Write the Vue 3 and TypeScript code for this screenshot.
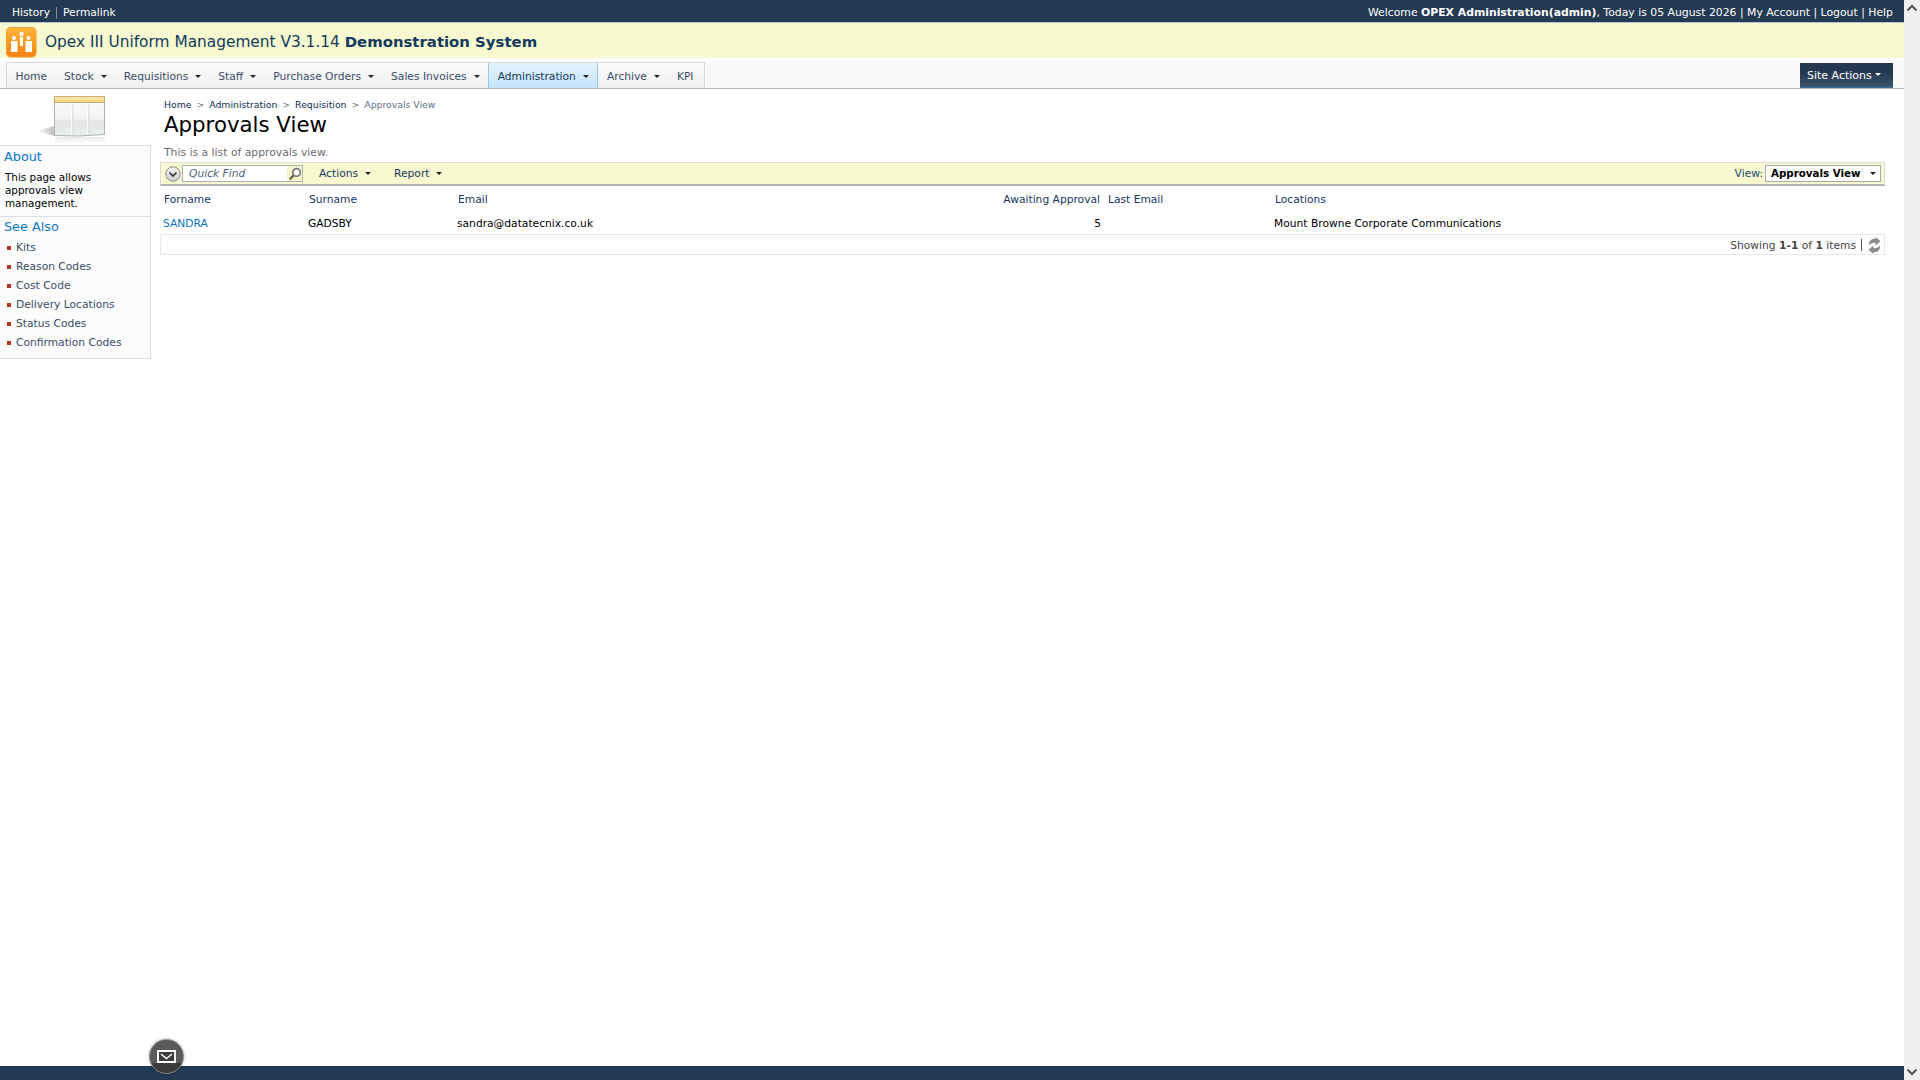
<script setup lang="ts">
interface NavItem { label: string; caret: boolean; active?: boolean }
const navItems: NavItem[] = [
  { label: 'Home', caret: false },
  { label: 'Stock', caret: true },
  { label: 'Requisitions', caret: true },
  { label: 'Staff', caret: true },
  { label: 'Purchase Orders', caret: true },
  { label: 'Sales Invoices', caret: true },
  { label: 'Administration', caret: true, active: true },
  { label: 'Archive', caret: true },
  { label: 'KPI', caret: false },
]
const seeAlso: string[] = ['Kits', 'Reason Codes', 'Cost Code', 'Delivery Locations', 'Status Codes', 'Confirmation Codes']
</script>

<template>
  <div class="shell">
    <div class="page">
      <header class="topbar">
        <div class="top-left"><a>History</a><i class="vsep"></i><a>Permalink</a></div>
        <div class="top-right">Welcome <b>OPEX Administration(admin)</b>, Today is 05 August 2026 | My Account | Logout | Help</div>
      </header>
      <div class="banner">
        <svg class="logo" width="31" height="31" viewBox="0 0 31 31">
          <defs>
            <linearGradient id="lg" x1="0" y1="0" x2="0" y2="1">
              <stop offset="0" stop-color="#fdb53a" />
              <stop offset="1" stop-color="#f5820f" />
            </linearGradient>
          </defs>
          <rect x="0.5" y="0.5" width="29.5" height="29.5" rx="4" fill="url(#lg)" stroke="#f0a030" />
          <circle cx="15.5" cy="7" r="2.2" fill="#fff" />
          <circle cx="8" cy="11" r="2" fill="#fff" />
          <circle cx="22.5" cy="11" r="2" fill="#fff" />
          <rect x="5" y="14" width="6.5" height="11" fill="#fff" />
          <rect x="19.5" y="14" width="6.5" height="11" fill="#fff" />
          <rect x="14" y="10" width="3" height="9" fill="#fff" />
        </svg>
        <div class="brand">Opex III Uniform Management V3.1.14 <b>Demonstration System</b></div>
      </div>
      <nav class="navrow">
        <ul class="nav">
          <li v-for="item in navItems" :key="item.label" :class="{ active: item.active }">
            {{ item.label }}<span v-if="item.caret" class="caret"></span>
          </li>
        </ul>
        <button class="site-actions">Site Actions<span class="caret light"></span></button>
      </nav>
      <main class="body">
        <aside class="side">
          <div class="side-icon">
            <svg width="80" height="50" viewBox="0 0 80 50">
              <defs>
                <linearGradient id="hd" x1="0" y1="0" x2="0" y2="1">
                  <stop offset="0" stop-color="#fbeeb8" />
                  <stop offset="1" stop-color="#f0cf70" />
                </linearGradient>
                <linearGradient id="pane" x1="0" y1="0" x2="0" y2="1">
                  <stop offset="0" stop-color="#fafbfb" />
                  <stop offset="0.55" stop-color="#f2f3f3" />
                  <stop offset="0.62" stop-color="#e4e6e6" />
                  <stop offset="1" stop-color="#ecedee" />
                </linearGradient>
                <linearGradient id="shad" x1="0" y1="0" x2="1" y2="0">
                  <stop offset="0" stop-color="#fff" />
                  <stop offset="1" stop-color="#c4c4c4" />
                </linearGradient>
                <linearGradient id="refl" x1="0" y1="0" x2="0" y2="1">
                  <stop offset="0" stop-color="#e8eaea" />
                  <stop offset="1" stop-color="#ffffff" />
                </linearGradient>
              </defs>
              <polygon points="10,35 28,30 28,40" fill="url(#shad)" />
              <rect x="28.5" y="41" width="50" height="7" fill="url(#refl)" />
              <path d="M28.5 0.5 H78.5 V38.5 Q53 41 28.5 39.5 Z" fill="url(#pane)" stroke="#a9b8b0" />
              <rect x="28.5" y="0.5" width="50" height="6" fill="url(#hd)" stroke="#c9b070" />
              <line x1="46" y1="7" x2="46" y2="39" stroke="#fff" stroke-width="1.5" />
              <line x1="46.8" y1="7" x2="46.8" y2="39" stroke="#b9c4bf" stroke-width="0.6" />
              <line x1="62" y1="7" x2="62" y2="39" stroke="#fff" stroke-width="1.5" />
              <line x1="62.8" y1="7" x2="62.8" y2="39" stroke="#b9c4bf" stroke-width="0.6" />
            </svg>
          </div>
          <div class="side-box">
            <section class="about">
              <h3>About</h3>
              <p>This page allows approvals view management.</p>
            </section>
            <section class="also">
              <h3>See Also</h3>
              <ul>
                <li v-for="link in seeAlso" :key="link">{{ link }}</li>
              </ul>
            </section>
          </div>
        </aside>
        <section class="content">
          <div class="crumbs">
            <a>Home</a><span class="gt">&gt;</span><a>Administration</a><span class="gt">&gt;</span><a>Requisition</a><span class="gt">&gt;</span><span class="cur">Approvals View</span>
          </div>
          <h1>Approvals View</h1>
          <p class="desc">This is a list of approvals view.</p>
          <div class="toolbar">
            <svg class="circle" width="16" height="16" viewBox="0 0 16 16">
              <defs>
                <linearGradient id="circ" x1="0" y1="0" x2="0" y2="1">
                  <stop offset="0" stop-color="#f4f4f4" />
                  <stop offset="1" stop-color="#cfcfcf" />
                </linearGradient>
              </defs>
              <circle cx="8" cy="8" r="7.2" fill="url(#circ)" stroke="#8a8a8a" />
              <path d="M4.5 6.5 L8 10 L11.5 6.5" fill="none" stroke="#333" stroke-width="1.6" />
            </svg>
            <div class="find">
              <span class="find-text">Quick Find</span>
              <span class="find-btn">
                <svg width="14" height="14" viewBox="0 0 14 14">
                  <circle cx="8.5" cy="5.5" r="3.8" fill="#fff" stroke="#777" stroke-width="1.8" />
                  <line x1="5.6" y1="8.4" x2="1.8" y2="12.4" stroke="#6a6a5a" stroke-width="2.4" />
                </svg>
              </span>
            </div>
            <span class="tool">Actions<span class="caret"></span></span>
            <span class="tool report">Report<span class="caret"></span></span>
            <span class="view-label">View:</span>
            <span class="view-select">Approvals View<span class="caret dark"></span></span>
          </div>
          <div class="grid head">
            <span class="c1">Forname</span><span class="c2">Surname</span><span class="c3">Email</span><span class="c4">Awaiting Approval</span><span class="c5">Last Email</span><span class="c6">Locations</span>
          </div>
          <div class="grid row">
            <a class="c1 link">SANDRA</a><span class="c2">GADSBY</span><span class="c3">sandra@datatecnix.co.uk</span><span class="c4 five">5</span><span class="c5"></span><span class="c6">Mount Browne Corporate Communications</span>
          </div>
          <div class="pager">
            <span>Showing <b>1-1</b> of <b>1</b> items</span><i class="pipe"></i>
            <svg width="13" height="17" viewBox="0 0 13 17">
              <path d="M1 8.5 C0.5 3.5 4.5 1 7.5 2 L7.5 0 L12.5 4.2 L7.5 8.5 L7.5 6 C5.5 5.2 3 6 1 8.5 Z" fill="#8a8a8a" />
              <path d="M12 8.5 C12.5 13.5 8.5 16 5.5 15 L5.5 17 L0.5 12.8 L5.5 8.5 L5.5 11 C7.5 11.8 10 11 12 8.5 Z" fill="#8a8a8a" />
            </svg>
          </div>
        </section>
      </main>
      <footer class="footer"></footer>
      <button class="mail" aria-label="Mail">
        <svg width="19" height="13" viewBox="0 0 19 13">
          <rect x="1" y="1" width="17" height="11" fill="#3c3c3c" stroke="#fff" stroke-width="2" />
          <path d="M4 4 L9.5 8.5 L15 4" fill="none" stroke="#fff" stroke-width="1.6" />
        </svg>
      </button>
    </div>
    <div class="scrollbar">
      <svg width="16" height="16" viewBox="0 0 16 16"><path d="M3.5 10.5 L8 6 L12.5 10.5" fill="none" stroke="#555" stroke-width="2" /></svg>
      <svg width="16" height="16" viewBox="0 0 16 16"><path d="M3.5 5.5 L8 10 L12.5 5.5" fill="none" stroke="#555" stroke-width="2" /></svg>
    </div>
  </div>
</template>

<style>
html, body { margin: 0; overflow: hidden; }
</style>

<style scoped>
.shell { display: flex; height: 1080px; font-family: "DejaVu Sans", Verdana, sans-serif; font-size: 10.7px; color: #000; background: #fff; }
.page { position: relative; flex: 1; display: flex; flex-direction: column; min-width: 0; }
.scrollbar { width: 16px; background: #f0f0f0; display: flex; flex-direction: column; justify-content: space-between; }

.topbar { border-bottom: 1px solid #b4c4d2; background: #243a52; color: #fff; display: flex; justify-content: space-between; align-items: center; padding: 3px 11px 0 12px; box-sizing: border-box; height: 23px; }
.top-left { display: flex; align-items: center; }
.vsep { width: 1px; height: 12px; background: #7c8ea0; margin: 0 6px; }
.top-right { font-size: 10.85px; }
.top-right b { font-weight: 700; }

.banner { height: 35px; background: #f8f9d0; display: flex; align-items: center; padding-left: 6px; gap: 8px; }
.logo { margin-top: 4px; flex: none; }
.brand { font-size: 15.36px; color: #11395c; white-space: nowrap; padding-top: 3px; }
.brand b { font-weight: 700; font-size: 14.9px; }

.navrow { height: 31px; box-sizing: border-box; background: linear-gradient(#ffffff, #f8f8f8 20%); border-bottom: 1px solid #b4b4b4; display: flex; justify-content: space-between; align-items: flex-end; padding: 0 11px 0 6px; }
.nav { list-style: none; margin: 0; padding: 0; display: flex; height: 25px; border: 1px solid #d8d8d8; border-bottom: 0; background: linear-gradient(#fbfbfb, #efefef); color: #3b4d68; }
.nav li { padding: 1px 8.5px 0; display: flex; align-items: center; white-space: nowrap; }
.nav li.active { background: linear-gradient(#e4f3fd, #c4e4fa); border-left: 1px solid #94c8ec; border-right: 1px solid #94c8ec; color: #16365c; padding: 1px 8.5px 0; }
.nav li:last-child { padding-right: 10px; }
.caret { display: inline-block; width: 0; height: 0; border-left: 3px solid transparent; border-right: 3px solid transparent; border-top: 3px solid #222; margin-left: 7px; flex: none; }
.caret.light { border-top-color: #fff; margin-left: 3px; margin-bottom: 2px; }
.caret.dark { margin-left: 9px; }
.site-actions { height: 25px; width: 93px; padding: 0 0 0 7px; border: 0; border-bottom: 1px solid #3a6a96; background: linear-gradient(#24384f 40%, #3e556f); color: #fff; font: inherit; font-size: 11px; display: flex; align-items: center; }

.body { flex: 1; display: flex; min-height: 0; }
.side { width: 151px; flex: none; }
.side-icon { height: 56px; display: flex; padding-left: 26px; padding-top: 7px; box-sizing: border-box; overflow: hidden; }
.side-box { border-right: 1px solid #dcdcdc; border-bottom: 1px solid #dcdcdc; border-top: 1px solid #dcdcdc; background: #fcfcfc; }
.side h3 { margin: 0; font-size: 12.8px; font-weight: 400; color: #0a78c8; padding-left: 4px; line-height: 20px; }
.about { height: 70px; border-bottom: 1px solid #dcdcdc; }
.about h3 { padding-top: 1px; }
.about p { margin: 4px 0 0 5px; width: 96px; line-height: 13px; font-size: 10.4px; }
.also { height: 141px; }
.also ul { list-style: none; margin: 0; padding: 1px 0 0 16px; color: #3b4d68; }
.also li { position: relative; height: 19px; line-height: 19px; white-space: nowrap; }
.also li::before { content: ""; position: absolute; left: -9px; top: 8px; width: 4px; height: 4px; background: #b5361c; }

.content { flex: 1; padding: 0 19px 0 9px; min-width: 0; }
.crumbs { margin: 10px 0 0 4px; height: 13px; line-height: 12px; font-size: 9.3px; color: #0e2e52; white-space: nowrap; }
.gt { color: #777; margin: 0 5px; }
.cur { color: #5f6f85; }
h1 { margin: 1px 0 0 4px; font-size: 21.3px; font-weight: 400; line-height: 24px; color: #000; white-space: nowrap; }
.desc { margin: 8px 0 0 4px; line-height: 15px; color: #6b6b6b; font-size: 10.8px; }
.toolbar { margin-top: 2px; height: 24px; box-sizing: border-box; display: flex; align-items: center; background: #f8f9d0; border: 1px solid #dcdcdc; border-bottom: 2px solid #b4b4b4; color: #16365c; padding: 0 3px 0 4px; }
.circle { flex: none; }
.find { margin-left: 1px; width: 121px; height: 17px; box-sizing: border-box; border: 1px solid #a8b0b8; background: #fff; display: flex; justify-content: space-between; align-items: center; }
.find-text { font-style: italic; padding-left: 6px; color: #4f5f78; }
.find-btn { width: 15px; height: 15px; background: #f6f6cc; display: flex; align-items: center; justify-content: center; }
.tool { margin-left: 16px; white-space: nowrap; display: inline-flex; align-items: center; }
.tool.report { margin-left: 23px; }
.view-label { margin-left: auto; margin-right: 2px; color: #16486e; }
.view-select { width: 116px; height: 17px; box-sizing: border-box; border: 1px solid #a8a8a8; background: #fff; font-weight: 700; font-size: 10.3px; color: #000; padding-left: 5px; display: flex; align-items: center; white-space: nowrap; margin-top: -1px; }

.grid { display: grid; grid-template-columns: 145px 149px 537px 113px 167px 1fr; white-space: nowrap; }
.head { height: 24px; padding-top: 1px; align-items: center; color: #16365c; padding-left: 4px; }
.row { height: 22px; padding-top: 1px; align-items: center; padding-left: 3px; }
.c4 { text-align: right; padding-right: 8px; }
.five { padding-right: 6px; }
.link { color: #0a72c4; }
.pager { height: 21px; box-sizing: border-box; border: 1px solid #e8e8e8; display: flex; justify-content: flex-end; align-items: center; padding: 1px 3px 0 0; color: #444; }
.pipe { width: 1px; height: 12px; background: #555; margin: 0 6px 0 5px; }

.footer { height: 14px; background: #243a52; flex: none; }
.mail { position: absolute; left: 149px; top: 1039px; width: 35px; height: 35px; border-radius: 50%; border: 1px solid #888; padding: 0; background: linear-gradient(#5a5a5a 70%, #3a3a3c 70%); display: flex; align-items: center; justify-content: center; box-shadow: 0 0 3px rgba(0,0,0,.3); }
</style>
